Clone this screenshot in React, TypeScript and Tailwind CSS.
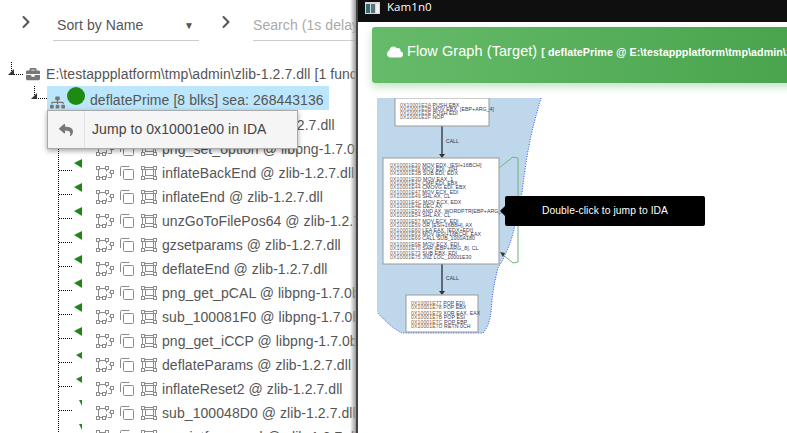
import { ChevronRight } from "lucide-react";
import { FaBriefcase, FaCloud, FaReply, FaSitemap } from "react-icons/fa";

const ROWS = [
  { name: "inflatePrime @ zlib-1.2.7.dll", tri: "0,4 8,0 8,9" },
  { name: "png_set_option @ libpng-1.7.0b54.dll", tri: "0,4 8,0 8,9" },
  { name: "inflateBackEnd @ zlib-1.2.7.dll", tri: "0,4 8,0 8,9" },
  { name: "inflateEnd @ zlib-1.2.7.dll", tri: "0,4 8,0 8,9" },
  { name: "unzGoToFilePos64 @ zlib-1.2.7.dll", tri: "0,4 8,0 8,9" },
  { name: "gzsetparams @ zlib-1.2.7.dll", tri: "0,4 8,0 8,9" },
  { name: "deflateEnd @ zlib-1.2.7.dll", tri: "0,4 8,0 8,9" },
  { name: "png_get_pCAL @ libpng-1.7.0b54.dll", tri: "0,4 8,0 8,9" },
  { name: "sub_100081F0 @ libpng-1.7.0b54.dll", tri: "0,4 8,0 8,9" },
  { name: "png_get_iCCP @ libpng-1.7.0b54.dll", tri: "0,4 8,0 8,9" },
  { name: "deflateParams @ zlib-1.2.7.dll", tri: "2,4 8,1 8,8" },
  { name: "inflateReset2 @ zlib-1.2.7.dll", tri: "2,4 8,1 8,8" },
  { name: "sub_100048D0 @ zlib-1.2.7.dll", tri: "5,1 8,1 8,7" },
  { name: "gzprintf_unused @ zlib-1.2.7.dll", tri: "5,1 8,1 8,7" },
];

// "" marks the small gap between instruction groups
const BLOCK_A = ["1E2A|PUSH EBX", "1E2B|MOV EBX, [EBP+ARG_4]", "1E2E|PUSH EDI", "1E2F|NOP"];
const BLOCK_B = [
  "1E30|MOV EDX, [ESI+16BCH]", "1E36|MOV EDI, 10H", "1E3B|SUB EDI, EDX", "",
  "1E3D|MOV EAX, 1", "1E42|CMP EDI, EBX", "1E44|CMOVG EDI, EBX", "",
  "1E47|MOV ECX, EDI", "1E49|SHL AX, CL", "",
  "1E4C|MOV ECX, EDX", "1E4E|DEC AX", "",
  "1E50|AND AX, WORDPTR[EBP+ARG_8]", "1E54|SHL AX, CL", "",
  "1E57|MOV ECX, EDI", "1E59|OR [ESI+16B8H], AX", "",
  "1E60|LEA EAX, [EDX+EDI]", "1E63|MOV [ESI+16BCH], EAX", "1E69|CALL SUB_1000A180", "",
  "1E6E|MOV ECX, EDI", "1E70|SAR [EBP+ARG_8], CL", "",
  "1E73|SUB EBX, EDI", "1E75|JNZ LOC_10001E30",
];
const BLOCK_C = ["1E77|POP EDI", "1E78|POP EBX", "", "1E79|XOR EAX, EAX", "1E7B|POP ESI", "", "1E7C|POP EBP", "1E7D|RETN 0CH"];

const EDGE = "M541 98 C535 120 528 140 522 193 C518 215 515 225 512 237 C508 250 503 260 498 268 C495 280 493 290 492 300 C491 315 490 325 483 333 H402 C392 328 384 320 377 312";

// one disassembly block of the flow graph
function GraphBlock({ x, y, w, h, lines, first, pad }: { x: number; y: number; w: number; h: number; lines: string[]; first: number; pad: number }) {
  let ty = first;
  return (
    <g>
      <rect x={x} y={y} width={w} height={h} fill="#fff" stroke="#999" strokeWidth="1" />
      {lines.map((line, i) => {
        if (!line) {
          ty += 1.5;
          return null;
        }
        const [addr, op] = line.split("|");
        const at = ty;
        ty += 4;
        return (
          <text key={i} x={x + pad} y={at} fontSize="5.2" fontFamily="'Liberation Sans', sans-serif">
            <tspan fill="#7a5a45">{"0X10001" + addr.slice(1)}</tspan>
            <tspan fill="#333a55"> {op}</tspan>
          </text>
        );
      })}
    </g>
  );
}

function FlowGraph() {
  return (
    <svg width="240" height="245" viewBox="0 0 240 245" className="block">
      <g transform="translate(-377 -98)">
        <path d={EDGE + " V98 Z"} fill="#bfd7ea" />
        <path d={EDGE} fill="none" stroke="#3b4cf0" strokeWidth="1" strokeDasharray="1 1.5" />
        <path d="M442 126 V156" stroke="#5c6b78" strokeWidth="2" fill="none" />
        <path d="M442 264 V293" stroke="#5c6b78" strokeWidth="2" fill="none" />
        <polygon points="439,154 445,154 442,158" fill="#333" />
        <polygon points="439,291 445,291 442,295" fill="#333" />
        <text x="446" y="143" fontSize="5" fill="#333" fontFamily="'Liberation Sans', sans-serif">CALL</text>
        <text x="446" y="280" fontSize="5" fill="#333" fontFamily="'Liberation Sans', sans-serif">CALL</text>
        <path d="M499 168 L513 157 L518 158 L518 262 L513 263 L502 254" stroke="#6fb47f" strokeWidth="1" fill="none" />
        <polygon points="500,252 505,253 503,257" fill="#333" />
        <GraphBlock x={395} y={98} w={94} h={28} lines={BLOCK_A} first={107} pad={5} />
        <GraphBlock x={383} y={158} w={116} h={106} lines={BLOCK_B} first={167} pad={7} />
        <GraphBlock x={406} y={295} w={72} h={37} lines={BLOCK_C} first={305} pad={5} />
      </g>
    </svg>
  );
}

function LeafIcons() {
  return (
    <div className="flex shrink-0 items-center text-[#8c8c8c]">
      <svg width="18" height="14" viewBox="0 0 18 14" fill="none" stroke="currentColor" strokeWidth="1" className="shrink-0">
        <path d="M2.5 2.5 H10.5 M2.5 2.5 V11.5 H7 M10.5 2.5 V5.5 M9 11.5 H10.5 V8 M13 6.5 H15.5 V11.5 H12" />
        <rect x="0.5" y="0.5" width="3" height="3" fill="#fff" />
        <rect x="9.5" y="0.5" width="3" height="3" fill="#fff" />
        <rect x="0.5" y="10.5" width="3" height="3" fill="#fff" />
        <rect x="6.5" y="10.5" width="3" height="3" fill="#fff" />
        <rect x="14.5" y="4.5" width="3" height="3" fill="#fff" />
      </svg>
      <svg width="15" height="14" viewBox="0 0 15 14" fill="none" stroke="currentColor" strokeWidth="1" className="ml-[6px] shrink-0">
        <path d="M0.5 10 V1.5 Q0.5 0.5 1.5 0.5 H9.5" />
        <rect x="3.5" y="3.5" width="10" height="10" rx="1" />
      </svg>
      <svg width="16" height="14" viewBox="0 0 16 14" fill="none" stroke="currentColor" strokeWidth="1" className="ml-[6px] shrink-0">
        <rect x="1.5" y="1.5" width="13" height="11" />
        <rect x="4.5" y="3.5" width="8" height="6" />
        <rect x="0.5" y="0.5" width="3" height="3" fill="#fff" />
        <rect x="12.5" y="0.5" width="3" height="3" fill="#fff" />
        <rect x="0.5" y="10.5" width="3" height="3" fill="#fff" />
        <rect x="12.5" y="10.5" width="3" height="3" fill="#fff" />
      </svg>
    </div>
  );
}

function CornerMark() {
  return (
    <svg width="6" height="6" viewBox="0 0 6 6" className="absolute bottom-[-1px] left-[-4px]">
      <polygon points="0,6 6,6 6,0" fill="#333" />
    </svg>
  );
}

export default function App() {
  return (
    <div className="flex h-[433px] w-[787px] overflow-hidden bg-white font-['Liberation_Sans',Arial,sans-serif] text-[14px] tracking-[0.07px] text-[#555]">
      <div className="relative w-[356px] shrink-0 overflow-hidden">
        {/* toolbar */}
        <div className="flex h-[41px] items-start pt-[14px]">
          <ChevronRight className="-mt-[2px] ml-[16px] h-[20px] w-[20px] shrink-0" strokeWidth={2.4} />
          <div className="ml-[17px] flex h-[27px] w-[146px] shrink-0 items-center justify-between border-b border-[#ccc] pb-[4px] pl-[4px] pr-[5px]">
            <span>Sort by Name</span>
            <span className="text-[10px]">▼</span>
          </div>
          <ChevronRight className="-mt-[2px] ml-[17px] h-[20px] w-[20px] shrink-0" strokeWidth={2.4} />
          <div className="ml-[17px] flex h-[27px] flex-1 items-center overflow-hidden whitespace-nowrap border-b border-[#ccc] pb-[4px] text-[#aaa]">
            Search (1s delay)
          </div>
        </div>

        {/* tree root */}
        <div className="mt-[21px] flex h-[24px] items-center whitespace-nowrap">
          <div className="relative ml-[11px] h-[13px] w-[12px] shrink-0 self-start border-b border-l border-dotted border-black">
            <CornerMark />
          </div>
          <FaBriefcase className="ml-[3px] h-[14px] w-[14px] shrink-0 text-[#777]" />
          <span className="ml-[6px]">E:\testappplatform\tmp\admin\zlib-1.2.7.dll [1 functions]</span>
        </div>

        {/* function node */}
        <div className="flex h-[24px] items-start whitespace-nowrap">
          <div className="relative ml-[34px] h-[13px] w-[13px] shrink-0 border-b border-l border-dotted border-black">
            <CornerMark />
          </div>
          <div className="flex h-[24px] w-[282px] shrink-0 items-center bg-[#bbe6fb]">
            <FaSitemap className="ml-[3px] mt-[8px] h-[15px] w-[15px] shrink-0 text-[#777]" />
            <div className="mb-[5px] ml-[2px] h-[18px] w-[18px] shrink-0 rounded-full bg-[#1e8a14]" />
            <span className="ml-[5px] mt-[5px]">deflatePrime [8 blks] sea: 268443136</span>
          </div>
        </div>

        {/* context menu */}
        <div className="absolute left-[47px] top-[110px] z-10 flex h-[39px] w-[251px] items-center border border-[#aaa] bg-[#f5f5f5] shadow-[0_2px_5px_rgba(0,0,0,0.35)]">
          <div className="flex h-full w-[37px] shrink-0 items-center justify-center border-r border-[#e2e2e2]">
            <FaReply className="h-[14px] w-[14px] text-[#777]" />
          </div>
          <span className="ml-[7px] text-[#444]">Jump to 0x10001e00 in IDA</span>
        </div>

        {/* leaves */}
        <div className="ml-[58px] border-l border-dotted border-black">
          {ROWS.map((row) => (
            <div key={row.name} className="flex h-[24px] items-center whitespace-nowrap">
              <div className="w-[13px] shrink-0 border-t border-dotted border-black" />
              <svg width="8" height="9" viewBox="0 0 8 9" className="mb-[14px] ml-[2px] shrink-0">
                <polygon points={row.tri} fill="#1e8a14" />
              </svg>
              <div className="ml-[14px] mt-[6px] shrink-0">
                <LeafIcons />
              </div>
              <span className="ml-[5px] mt-[6px]">{row.name}</span>
            </div>
          ))}
        </div>

        {/* shadow of the window on top */}
        <div className="absolute inset-y-0 right-0 w-[6px] bg-gradient-to-r from-transparent to-[#999]" />
      </div>

      {/* Kam1n0 window */}
      <div className="relative min-w-0 flex-1 overflow-hidden border-l-2 border-[#444]">
        <div className="flex h-[22px] items-center bg-[#0f0f0f] pb-[8px] text-white">
          <svg width="15" height="12" viewBox="0 0 15 12" className="ml-[7px] mt-[1px] shrink-0">
            <rect width="15" height="12" fill="#d8d8d8" />
            <rect x="1" y="2" width="4" height="9" fill="#2f6f6f" />
            <rect x="6" y="2" width="4" height="9" fill="#5f6f7f" />
            <rect x="11" y="2" width="3" height="9" fill="#f0f0f0" />
          </svg>
          <span className="ml-[7px] font-['Open_Sans',sans-serif] text-[11.5px]">Kam1n0</span>
        </div>
        <div className="ml-[14px] mt-[5px] flex h-[56px] w-[500px] items-center whitespace-nowrap rounded-[3px] bg-gradient-to-r from-[#66bb6a] to-[#43a047] pb-[6px] pl-[15px] text-white shadow-[0_4px_8px_rgba(76,175,80,0.35)]">
          <FaCloud className="h-[16px] w-[16px] shrink-0" />
          <span className="ml-[4px] text-[14.5px]">Flow Graph (Target)</span>
          <span className="ml-[4px] text-[10.7px] font-bold">[ deflatePrime @ E:\testappplatform\tmp\admin\zlib-1.2.7.dll ]</span>
        </div>
        <div className="ml-[19px] mt-[15px]">
          <FlowGraph />
        </div>

        {/* tooltip */}
        <div className="absolute left-[147px] top-[196px] flex h-[30px] w-[200px] items-center justify-center rounded-[2px] bg-black text-[10.3px] text-white">
          <span className="absolute left-[-5px] h-0 w-0 border-y-[5px] border-r-[5px] border-y-transparent border-r-black" />
          Double-click to jump to IDA
        </div>
      </div>
    </div>
  );
}
